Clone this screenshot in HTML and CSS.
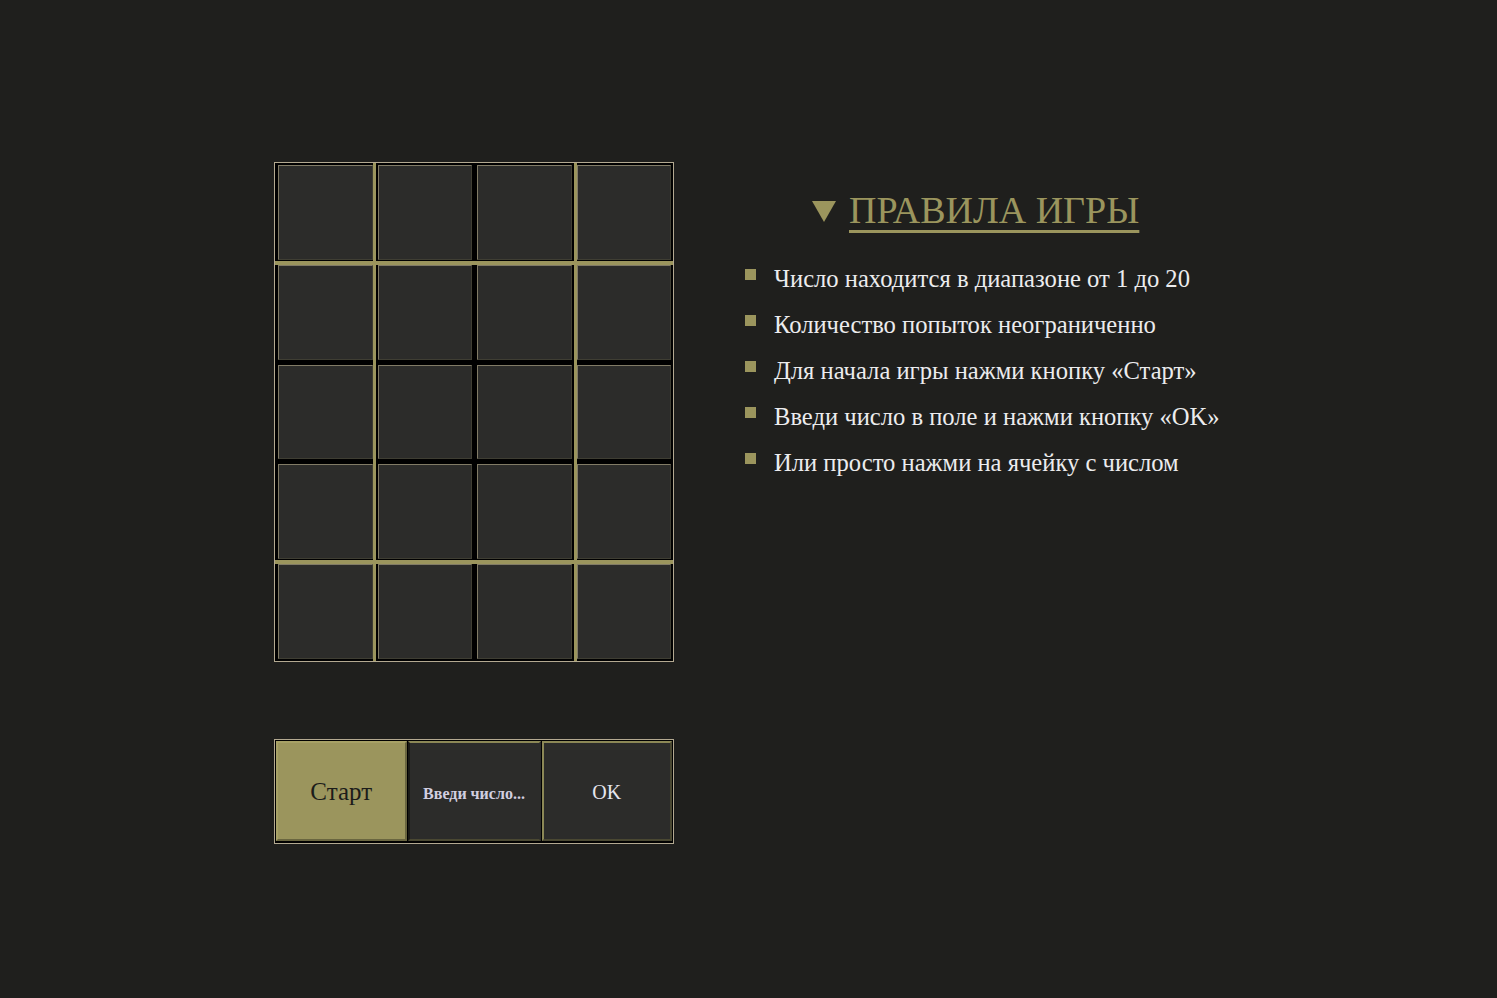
FILE: index.html
```html
<!DOCTYPE html>
<html lang="ru">
<head>
<meta charset="utf-8">
<title>Угадай число</title>
<link rel="stylesheet" href="styles.css">
</head>
<body>
<div class="page">
  <div class="game">
    <div class="board">
      <div class="cell"></div><div class="cell"></div><div class="cell"></div><div class="cell"></div>
      <div class="cell"></div><div class="cell"></div><div class="cell"></div><div class="cell"></div>
      <div class="cell"></div><div class="cell"></div><div class="cell"></div><div class="cell"></div>
      <div class="cell"></div><div class="cell"></div><div class="cell"></div><div class="cell"></div>
      <div class="cell"></div><div class="cell"></div><div class="cell"></div><div class="cell"></div>
    </div>
    <div class="controls">
      <button class="btn btn-start" type="button">Старт</button>
      <input class="field" type="text" placeholder="Введи число...">
      <button class="btn btn-ok" type="button">OK</button>
    </div>
  </div>
  <details class="rules" open>
    <summary class="rules-title">
      <svg class="tri" width="24" height="21" viewBox="0 0 24 21"><polygon points="0,0 24,0 12,21" fill="#9b955d"/></svg>
      <span class="rules-text">ПРАВИЛА ИГРЫ</span>
    </summary>
    <ul class="rules-list">
      <li>Число находится в диапазоне от 1 до 20</li>
      <li>Количество попыток неограниченно</li>
      <li>Для начала игры нажми кнопку «Старт»</li>
      <li>Введи число в поле и нажми кнопку «OK»</li>
      <li>Или просто нажми на ячейку с числом</li>
    </ul>
  </details>
</div>
</body>
</html>
```

FILE: styles.css
```css
html, body {
  margin: 0;
  padding: 0;
  background: #1f1f1d;
  font-family: "Liberation Serif", "Times New Roman", serif;
}

.page {
  display: flex;
  align-items: flex-start;
  gap: 71px;
  padding: 162px 0 0 274px;
}

.game {
  display: flex;
  flex-direction: column;
  gap: 77px;
  width: 400px;
}

.board {
  box-sizing: border-box;
  width: 400px;
  height: 500px;
  border: 1px solid #b3a991;
  padding: 2px 2px 2px 3px;
  background-color: #000;
  background-image:
    linear-gradient(#9b955d, #9b955d),
    linear-gradient(#9b955d, #9b955d),
    linear-gradient(#9b955d, #9b955d),
    linear-gradient(#9b955d, #9b955d);
  background-repeat: no-repeat;
  background-size: 3px 100%, 3px 100%, 100% 4px, 100% 4px;
  background-position: 98px 0, 299px 0, 0 98px, 0 397px;
  display: grid;
  grid-template-columns: repeat(4, 1fr);
  grid-template-rows: repeat(5, 1fr);
  gap: 5px;
}

.cell {
  background: #2c2c2a;
  border: 1px solid;
  border-color: #817b66 #3f3e33 #3f3e33 #817b66;
}

.controls {
  box-sizing: border-box;
  width: 400px;
  height: 105px;
  border: 1px solid #b3a991;
  background: #000;
  padding: 1px 1px 2px 1px;
  display: flex;
}

.btn, .field {
  box-sizing: border-box;
  height: 100px;
  margin: 0;
  font-family: "Liberation Serif", "Times New Roman", serif;
  border-style: solid;
  border-width: 2px;
}

.btn-start {
  width: 132px;
  background: #9b955d;
  border-color: #a7a166 #6a6640 #6a6640 #a7a166;
  color: #1c1c1a;
  font-size: 25px;
  padding: 2px 0 0 0;
}

.field {
  width: 133px;
  margin-left: 1px;
  background: #2c2c2a;
  border-color: #8c8856 #2c2c2a #4a4832 #1a1a16;
  color: #e6e6ee;
  font-size: 16px;
  font-weight: bold;
  text-align: center;
  padding: 6px 4px 0 4px;
  outline: none;
}

.field::placeholder {
  color: #d2cfe0;
  opacity: 1;
}

.btn-ok {
  width: 132px;
  margin-left: 1px;
  background: #2c2c2a;
  border-color: #8c8856 #4a4832 #4a4832 #8c8856;
  color: #e6e6ee;
  font-size: 20px;
  padding: 3px 0 0 0;
}

.rules {
  width: 520px;
  margin: 0;
}

.rules-title {
  list-style: none;
  display: flex;
  align-items: center;
  gap: 13px;
  padding: 26px 0 0 67px;
  cursor: pointer;
}

.rules-title::-webkit-details-marker {
  display: none;
}

.tri {
  display: block;
  margin-top: 2px;
}

.rules-text {
  color: #9b955d;
  font-size: 38px;
  line-height: 44px;
  text-decoration: underline;
  text-decoration-thickness: 3px;
  text-underline-offset: 7px;
}

.rules-list {
  list-style: none;
  margin: 33px 0 0 0;
  padding: 0;
  display: flex;
  flex-direction: column;
  gap: 18px;
}

.rules-list li {
  display: flex;
  align-items: flex-start;
  gap: 18px;
  color: #ececee;
  font-size: 24.6px;
  line-height: 28px;
}

.rules-list li::before {
  content: "";
  flex: none;
  width: 11px;
  height: 11px;
  margin-top: 4px;
  background: #9b955d;
}
```
